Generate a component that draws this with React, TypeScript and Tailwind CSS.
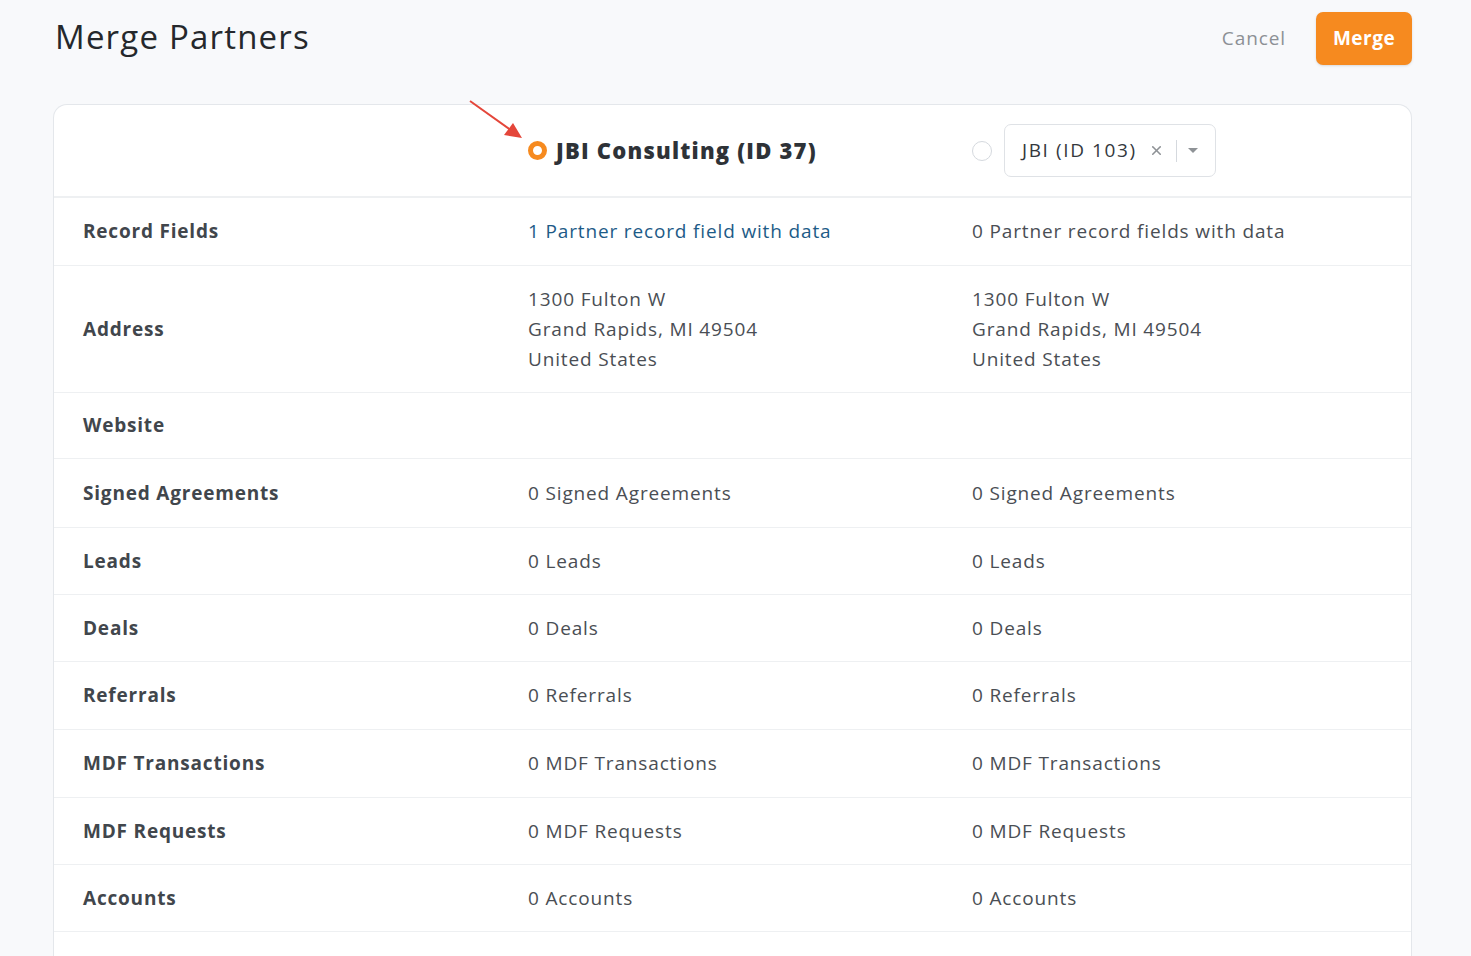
import { X } from "lucide-react";

const rows = [
  { label: "Record Fields", a: "1 Partner record field with data", b: "0 Partner record fields with data", link: true, h: "h-[68px]" },
  { label: "Address", a: ["1300 Fulton W", "Grand Rapids, MI 49504", "United States"], b: ["1300 Fulton W", "Grand Rapids, MI 49504", "United States"], h: "h-[127px]" },
  { label: "Website", a: "", b: "", h: "h-[66px]" },
  { label: "Signed Agreements", a: "0 Signed Agreements", b: "0 Signed Agreements", h: "h-[69px]" },
  { label: "Leads", a: "0 Leads", b: "0 Leads", h: "h-[67px]" },
  { label: "Deals", a: "0 Deals", b: "0 Deals", h: "h-[67px]" },
  { label: "Referrals", a: "0 Referrals", b: "0 Referrals", h: "h-[68px]" },
  { label: "MDF Transactions", a: "0 MDF Transactions", b: "0 MDF Transactions", h: "h-[68px]" },
  { label: "MDF Requests", a: "0 MDF Requests", b: "0 MDF Requests", h: "h-[67px]" },
  { label: "Accounts", a: "0 Accounts", b: "0 Accounts", h: "h-[67px]" },
];

function Value({ v, link }: { v: string | string[]; link?: boolean }) {
  if (Array.isArray(v)) {
    return (
      <div className="leading-[30px] text-[19px] font-medium tracking-[0.85px] text-[#4a4e54]">
        {v.map((l) => (
          <div key={l}>{l}</div>
        ))}
      </div>
    );
  }
  return (
    <div className={`text-[19px] font-medium tracking-[0.85px] ${link ? "text-[#1d5b87]" : "text-[#4a4e54]"}`}>{v}</div>
  );
}

export default function App() {
  return (
    <div className="min-h-screen bg-[#f8f9fb] font-['Open_Sans','Liberation_Sans',sans-serif]">
      <div className="flex items-center justify-between pl-[55px] pr-[59px] pt-[12px]">
        <h1 className="text-[33px] font-medium tracking-[1.2px] text-[#25282c] leading-[48px] -mt-[3px]">Merge Partners</h1>
        <div className="flex items-center gap-[30px]">
          <button className="text-[19px] font-medium tracking-[0.9px] text-[#8c9095]">Cancel</button>
          <button className="h-[53px] w-[96px] rounded-[7px] bg-[#f68a1f] text-[19px] tracking-[0.5px] font-bold text-white shadow-sm">
            Merge
          </button>
        </div>
      </div>

      <div className="ml-[53px] mr-[59px] mt-[39px] rounded-t-[14px] border border-b-0 border-[#e4e7eb] bg-white">
        <div className="relative grid h-[93px] grid-cols-[474px_444px_1fr] items-center border-b-2 border-[#eef0f2]">
          <div />
          <div className="relative flex items-center gap-[9px]">
            <svg className="absolute -left-[60px] -top-[35px]" width="60" height="48" viewBox="0 0 60 48">
              <line x1="2" y1="2" x2="44" y2="32" stroke="#e4463a" strokeWidth="2" />
              <polygon points="54,39 36,36 45,24" fill="#e4463a" />
            </svg>
            <span className="h-[19px] w-[19px] rounded-full border-[5px] border-[#f68a1f]" />
            <span className="text-[22px] font-extrabold text-[#2e3237] tracking-[1.2px]">JBI Consulting (ID 37)</span>
          </div>
          <div className="flex items-center gap-[12px]">
            <span className="h-[20px] w-[20px] rounded-full border border-[#d5d9de]" />
            <div className="flex h-[53px] w-[212px] items-center rounded-[7px] border border-[#dfe2e6] pl-[17px] pr-[12px]">
              <span className="text-[19px] font-medium tracking-[1.6px] text-[#34383d]">JBI (ID 103)</span>
              <X className="ml-[12px] h-[15px] w-[15px] text-[#8e9296]" strokeWidth={2.5} />
              <span className="ml-[12px] h-[22px] w-px bg-[#d5d9de]" />
              <span className="ml-[11px] h-0 w-0 border-x-[5px] border-t-[5px] border-x-transparent border-t-[#8e9296]" />
            </div>
          </div>
        </div>

        {rows.map((r) => (
          <div key={r.label} className={`grid grid-cols-[474px_444px_1fr] items-center border-b border-[#eef0f2] ${r.h}`}>
            <div className="pl-[29px] text-[19px] tracking-[0.8px] font-bold text-[#41464c]">{r.label}</div>
            <Value v={r.a} link={r.link} />
            <Value v={r.b} />
          </div>
        ))}
        <div className="h-[30px]" />
      </div>
    </div>
  );
}
